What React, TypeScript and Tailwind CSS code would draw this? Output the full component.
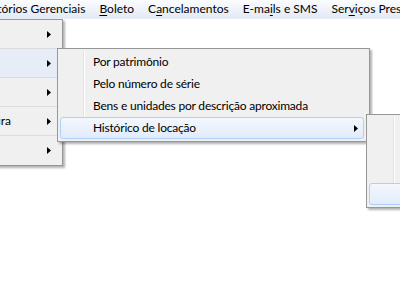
const font = { fontFamily: 'Lato, "Noto Sans", sans-serif' };

function Arrow() {
  return (
    <svg width="4" height="7" viewBox="0 0 4 7" className="shrink-0">
      <polygon points="0,0 4,3.5 0,7" fill="#000" />
    </svg>
  );
}

function U({ children }: { children: string }) {
  return <span className="underline underline-offset-2">{children}</span>;
}

const subItems = ["Por patrimônio", "Pelo número de série", "Bens e unidades por descrição aproximada"];

export default function App() {
  return (
    <div className="relative h-[300px] w-[400px] overflow-hidden bg-white text-[12px] text-black" style={font}>
      <div className="flex h-[19px] items-center whitespace-nowrap border-b border-[#e8eef7] bg-gradient-to-b from-[#fbfcfe] to-[#e3eaf5]">
        <span className="-ml-[32px] px-[7px]">Relatórios Gerenciais</span>
        <span className="px-[7px]">
          <U>B</U>oleto
        </span>
        <span className="px-[7px]">
          C<U>a</U>ncelamentos
        </span>
        <span className="px-[7px]">
          E-ma<U>i</U>ls e SMS
        </span>
        <span className="px-[7px]">
          Ser<U>v</U>iços Prestados
        </span>
      </div>

      {/* first-level menu */}
      <div className="absolute left-[-100px] top-[19px] flex w-[163px] flex-col border border-[#979797] bg-[#f0f0f0] shadow-[2px_2px_2px_rgba(0,0,0,0.3)]">
        {["", "", "", "Fatura", ""].map((label, i) => (
          <div
            key={i}
            className={`flex h-[29px] items-center pr-[11px] ${i < 4 ? "border-b border-[#dcdcdc]" : ""} ${i === 1 ? "bg-[#e6edf7]" : ""}`}
          >
            <span className="w-[110px] whitespace-nowrap text-right">{label}</span>
            <span className="flex-1" />
            <Arrow />
          </div>
        ))}
      </div>

      {/* second-level menu */}
      <div className="absolute left-[57px] top-[48px] w-[313px] border border-[#979797] bg-[#f0f0f0] p-[2px] tracking-[-0.2px] shadow-[2px_2px_2px_rgba(0,0,0,0.3)]">
        <div className="absolute bottom-[2px] left-[25px] top-[2px] w-px bg-[#e2e3e3]" />
        <div className="absolute bottom-[2px] left-[26px] top-[2px] w-px bg-white" />
        {subItems.map((t) => (
          <div key={t} className="relative flex h-[22px] items-center pl-[33px]">
            {t}
          </div>
        ))}
        <div className="relative flex h-[22px] w-[304px] items-center justify-between rounded-[3px] border border-[#aecff7] bg-gradient-to-b from-[#f3f7fd] to-[#e2ecfa] pl-[32px] pr-[5px]">
          <span>Histórico de locação</span>
          <Arrow />
        </div>
      </div>

      {/* third-level menu */}
      <div className="absolute left-[366px] top-[114px] w-[120px] border border-[#979797] bg-[#f0f0f0] p-[2px] shadow-[2px_2px_2px_rgba(0,0,0,0.3)]">
        <div className="absolute bottom-[2px] left-[26px] top-[2px] w-px bg-[#e2e3e3]" />
        <div className="absolute bottom-[2px] left-[27px] top-[2px] w-px bg-white" />
        <div className="h-[22px]" />
        <div className="h-[22px]" />
        <div className="h-[22px]" />
        <div className="relative h-[22px] rounded-[3px] border border-[#aecff7] bg-gradient-to-b from-[#f3f7fd] to-[#e2ecfa]" />
      </div>
    </div>
  );
}
